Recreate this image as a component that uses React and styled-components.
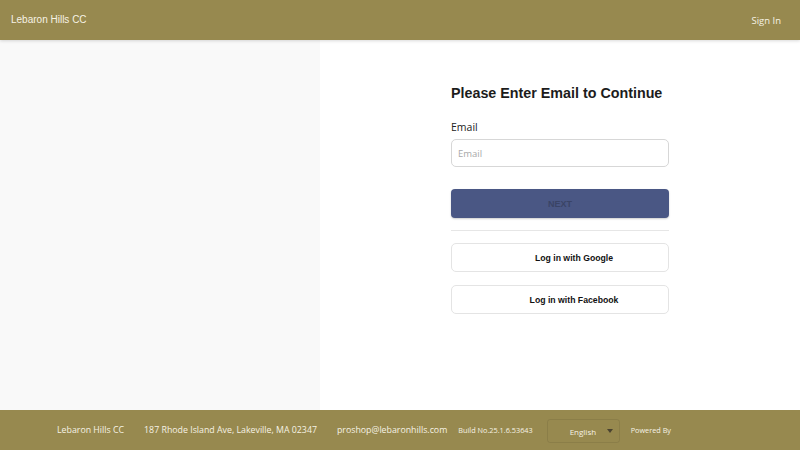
import React from 'react';
import styled, { createGlobalStyle } from 'styled-components';

const GlobalStyle = createGlobalStyle`
  html, body {
    margin: 0;
    padding: 0;
    height: 100%;
  }
  body {
    font-family: "Open Sans", "Liberation Sans", sans-serif;
    background: #ffffff;
  }
  #root {
    height: 100%;
  }
  * {
    box-sizing: border-box;
  }
`;

const Page = styled.div`
  display: flex;
  flex-direction: column;
  height: 450px;
`;

const Header = styled.header`
  height: 40px;
  flex-shrink: 0;
  background: #97894f;
  display: flex;
  align-items: center;
  justify-content: space-between;
  padding: 0 19px 0 11px;
  box-shadow: 0 1px 3px rgba(0, 0, 0, 0.15);
  position: relative;
  z-index: 1;
`;

const Brand = styled.div`
  font-family: "Liberation Sans", Arial, sans-serif;
  font-size: 10px;
  color: #f6f2e4;
  margin-top: -1px;
`;

const SignIn = styled.a`
  font-family: "Open Sans", sans-serif;
  font-size: 9.5px;
  color: #f6f2e4;
  cursor: pointer;
  margin-top: 1px;
`;

const Main = styled.main`
  flex: 1;
  display: grid;
  grid-template-columns: 320px 1fr;
`;

const SidePanel = styled.div`
  background: #f9f9f9;
`;

const FormArea = styled.div`
  background: #ffffff;
  padding: 45px 0 0 131px;
`;

const Form = styled.div`
  width: 218px;
  display: flex;
  flex-direction: column;
`;

const Title = styled.h1`
  font-family: "Liberation Sans", Arial, sans-serif;
  font-size: 14.3px;
  font-weight: 700;
  color: #1c1c1c;
  margin: 0 0 19px;
  white-space: nowrap;
`;

const Label = styled.label`
  font-size: 10.5px;
  color: #222;
  margin-bottom: 5px;
`;

const Input = styled.input`
  height: 28px;
  border: 1px solid #d7d7d7;
  border-radius: 5px;
  padding: 0 6px;
  font-family: "Open Sans", sans-serif;
  font-size: 9.5px;
  color: #333;
  outline: none;
  caret-color: #3b6ab7;
  &::placeholder {
    color: #a8a8a8;
  }
`;

const NextButton = styled.button`
  margin-top: 22px;
  height: 29px;
  border: none;
  border-radius: 4px;
  background: #4a5784;
  color: #3a4466;
  font-family: "Liberation Sans", Arial, sans-serif;
  font-size: 9px;
  font-weight: 700;
  box-shadow: 0 1px 2px rgba(0, 0, 0, 0.2);
`;

const Divider = styled.hr`
  border: none;
  border-top: 1px solid #e6e6e6;
  margin: 12px 0 12px;
  width: 100%;
`;

const SocialButton = styled.button`
  height: 29px;
  border: 1px solid #e4e4e4;
  border-radius: 5px;
  background: #fff;
  color: #111;
  font-family: "Liberation Sans", Arial, sans-serif;
  font-size: 8.7px;
  font-weight: 700;
  padding-left: 34px;
  margin-bottom: ${p => (p.$last ? '0' : '13px')};
  cursor: pointer;
`;

const Footer = styled.footer`
  height: 40px;
  flex-shrink: 0;
  background: #97894f;
  display: flex;
  align-items: center;
  padding-left: 57px;
  color: #f6f2e4;
  font-size: 8.8px;
`;

const FooterItem = styled.span`
  margin-right: ${p => p.$gap || 20}px;
  font-size: ${p => p.$size || 8.8}px;
  white-space: nowrap;
`;

const LangSelect = styled.div`
  width: 73px;
  height: 24px;
  border: 1px solid rgba(0, 0, 0, 0.08);
  border-radius: 3px;
  display: flex;
  align-items: center;
  padding-left: 22px;
  font-size: 8px;
  margin-right: 11px;
  margin-top: 2px;
`;

const Caret = styled.span`
  width: 0;
  height: 0;
  border-left: 3.5px solid transparent;
  border-right: 3.5px solid transparent;
  border-top: 4px solid #4a4330;
  margin-left: 11px;
`;

export default function App() {
  return (
    <>
      <GlobalStyle />
      <Page>
        <Header>
          <Brand>Lebaron Hills CC</Brand>
          <SignIn>Sign In</SignIn>
        </Header>
        <Main>
          <SidePanel />
          <FormArea>
            <Form>
              <Title>Please Enter Email to Continue</Title>
              <Label>Email</Label>
              <Input placeholder="Email" />
              <NextButton>NEXT</NextButton>
              <Divider />
              <SocialButton>Log in with Google</SocialButton>
              <SocialButton $last>Log in with Facebook</SocialButton>
            </Form>
          </FormArea>
        </Main>
        <Footer>
          <FooterItem>Lebaron Hills CC</FooterItem>
          <FooterItem>187 Rhode Island Ave, Lakeville, MA 02347</FooterItem>
          <FooterItem $gap={11}>proshop@lebaronhills.com</FooterItem>
          <FooterItem $gap={14} $size={7.3}>Build No.25.1.6.53643</FooterItem>
          <LangSelect>
            English
            <Caret />
          </LangSelect>
          <FooterItem $size={7.3}>Powered By</FooterItem>
        </Footer>
      </Page>
    </>
  );
}
